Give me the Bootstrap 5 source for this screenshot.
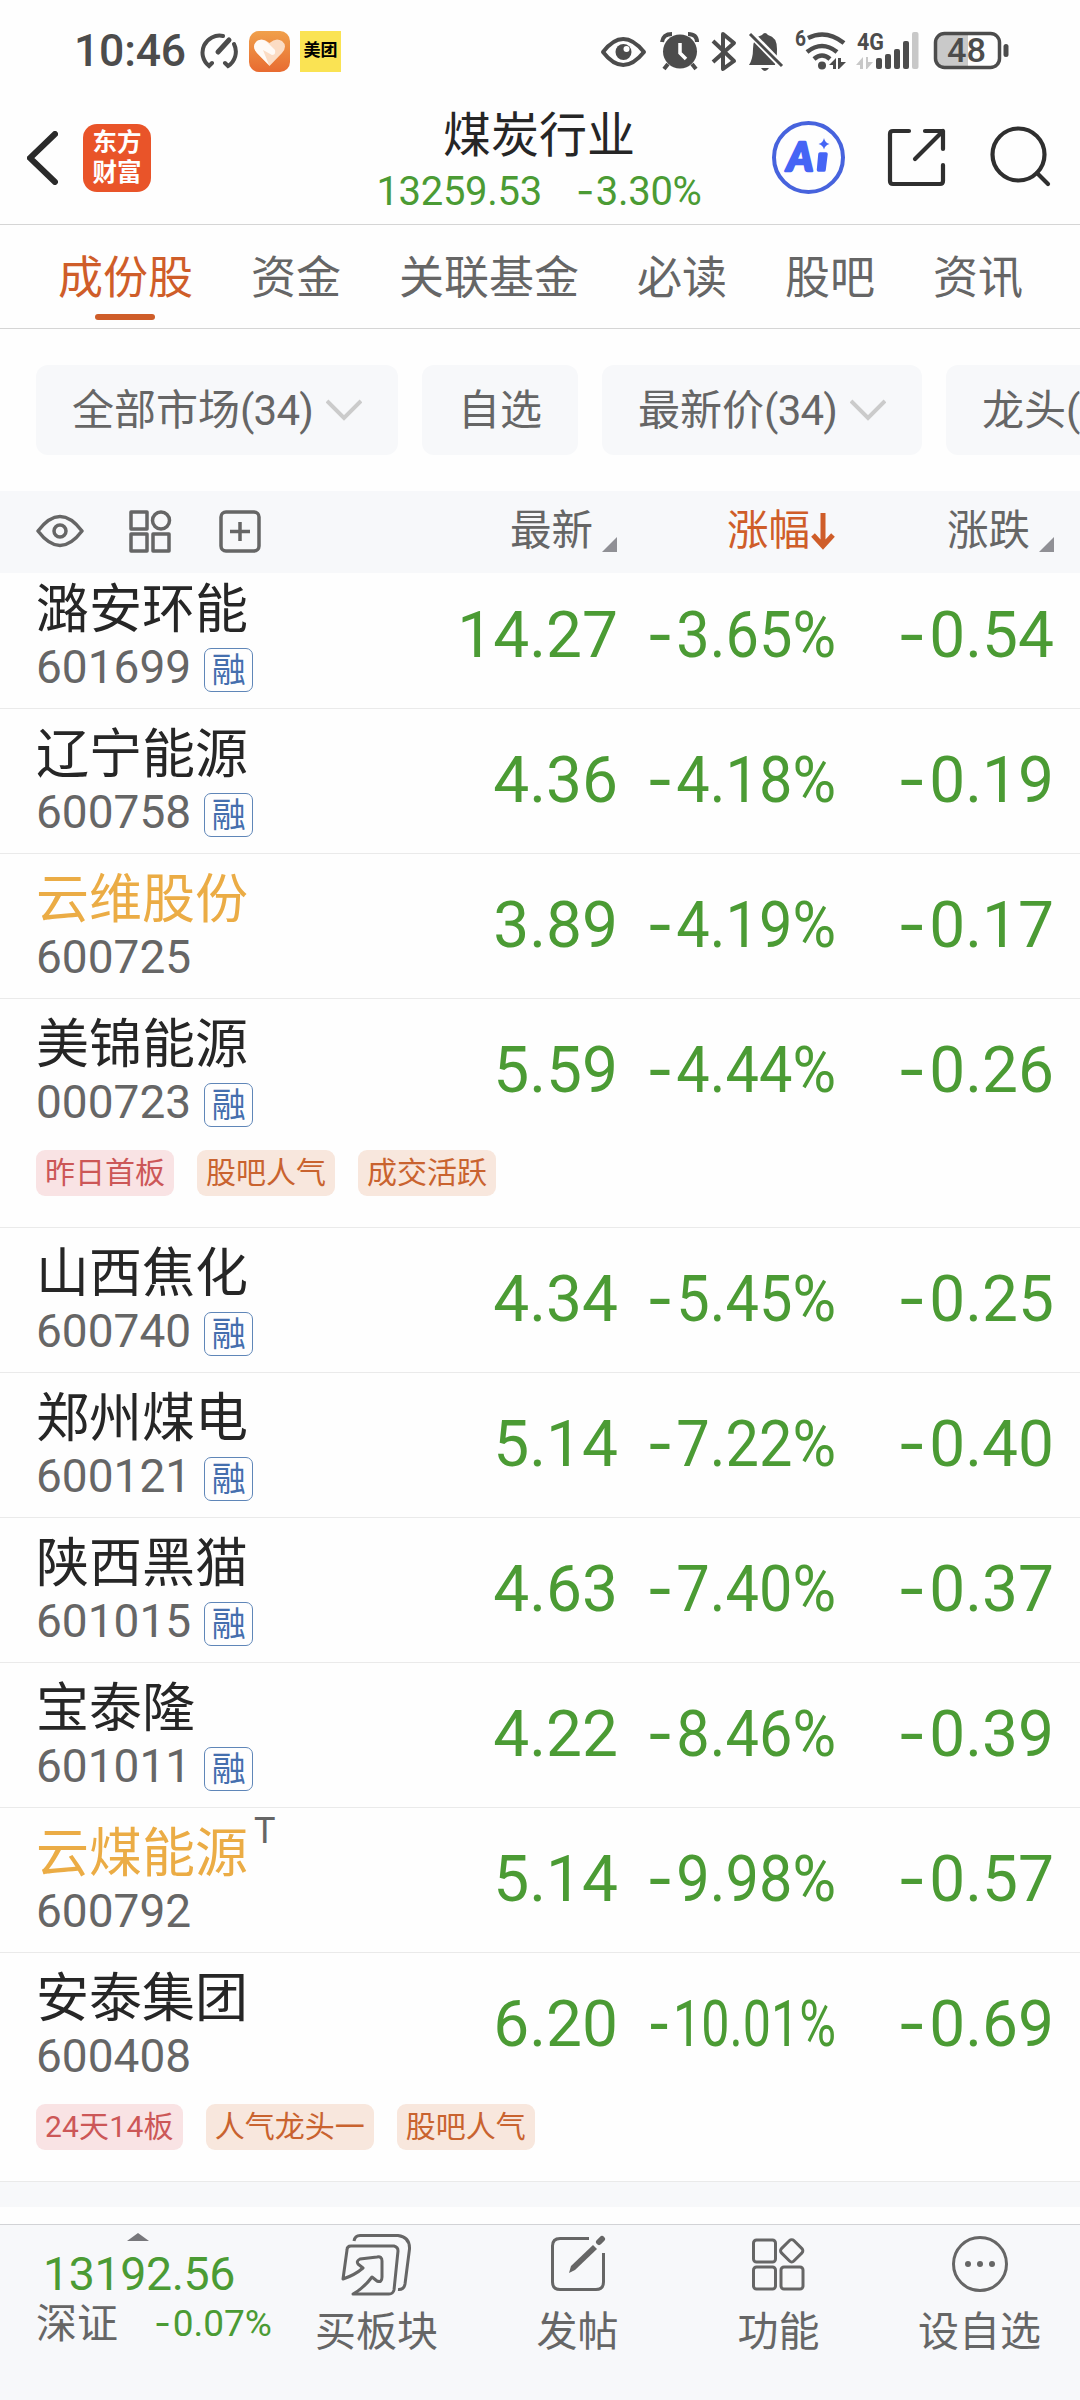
<!DOCTYPE html>
<html lang="zh-CN">
<head>
<meta charset="utf-8">
<meta name="viewport" content="width=device-width, initial-scale=1">
<title>煤炭行业</title>
<link href="https://cdn.jsdelivr.net/npm/bootstrap@5.3.0/dist/css/bootstrap.min.css" rel="stylesheet">
<style>
:root{--up:#4b9b34;--ink:#262626;--soft:#666;--pale:#f7f8fa;--hot:#cf5d29}
body{font-family:Roboto,"Noto Sans CJK SC",sans-serif;color:var(--ink);width:1080px;height:2400px;overflow:hidden;background:#fefefe}
svg{display:block;flex:none}
.green{color:var(--up)}
.neg{font-family:Inter,Roboto,sans-serif;line-height:0;margin-right:.045em}
.statusbar{height:92px;padding:10px 71px 0 74px;color:#4c4c4c}
.clock{font-size:44.5px;font-weight:500;line-height:50px;width:124px;letter-spacing:-.2px}
.heart-app{margin-left:11px}
.meituan{width:41px;height:41px;background:#fae353;color:#000;font-size:17px;font-weight:700;margin-left:10px}
.topbar{height:133px;border-bottom:1px solid #d5d5d5;padding:0 29px 0 27px}
.side{width:260px}
.brand{width:68px;height:68px;border-radius:14px;background:#e95429;color:#fff;font-weight:700;font-size:24.5px;line-height:30px;margin-left:25px}
.page-name{font-size:48px;line-height:54px;margin-top:17px}
.quote{font-size:40px;line-height:48px;margin-top:5px;gap:34px;letter-spacing:-.3px}
.tabs{height:104px;border-bottom:1px solid #d5d5d5;padding-left:58px;gap:58px;font-size:45px;line-height:108px;color:var(--soft)}
.tabs .current{color:var(--hot)}
.tabs .current::after{content:"";position:absolute;left:37px;bottom:8px;width:60px;height:6px;border-radius:3px;background:var(--hot)}
.filters{height:162px;padding:36px 0 36px 36px;gap:24px;overflow:hidden;font-size:42px;color:var(--soft)}
.chip{height:90px;border-radius:12px;background:var(--pale);padding:0 36px 0 36px;flex:none;gap:13px}
.chip .cnt{letter-spacing:-.8px}
.colhead{height:82px;background:var(--pale);font-size:41.5px;line-height:79px;color:var(--soft);padding-left:36px;position:relative;z-index:1}
.tri{width:15px;height:15px;background:#909095;clip-path:polygon(100% 0,100% 100%,0 100%);margin:46px 0 0 9px}
.pct{width:219px}.chg{width:218px;margin-right:26px}
.arrow{margin:21px 1px 0 1px}
.list{margin-top:-9px}
.stock{border-bottom:1px solid #eaeaea;padding-left:36px}
.main-line{height:144px}
.title-cn{font-size:53px;line-height:56px;margin-top:18px}
.gold{color:#ebac45}
.code{font-size:46px;line-height:46px;margin-top:6px;color:var(--soft)}
.rong{width:49px;height:44px;border:1.5px solid #5f86b8;border-radius:7px;color:#456fae;font-size:34px;line-height:42px;margin:4px 0 0 13px}
.sup-t{font-size:36px;line-height:36px;color:var(--soft);margin:5px 0 0 6px}
.num{font-size:64px;line-height:144px;color:var(--up);white-space:nowrap;text-align:right}
.c1{width:220px}.c2{width:218px;display:flex;justify-content:flex-end}.c3{width:218px;margin-right:26px}
.sq{transform:scaleX(.93);transform-origin:100% 50%}
.sq2{transform:scaleX(.785);transform-origin:100% 50%}
.tags{height:84px;padding-top:7px;gap:23px}
.tg{height:46px;border-radius:9px;padding:0 9px;font-size:30px;line-height:45px;background:#f8e7dd;color:#c9632f}
.tg.red{background:#f9e3e4;color:#cc5757}
.tg.run{letter-spacing:.2px}
.band{height:25px;background:var(--pale)}
.dock{height:176px;margin-top:17px;border-top:1px solid #d2d3d6;background:var(--pale);color:var(--soft);font-size:41px}
.dock .idx{width:276px;padding-left:36px}
.dock .big{font-size:46.5px;line-height:48px;margin:9px 0 0 7px;letter-spacing:-.4px}
.dock .peak{width:22px;height:8px;background:#77777b;clip-path:polygon(50% 0,100% 100%,0 100%);margin:8px 0 0 91px}
.dock .second{line-height:52px}
.dock .rate{font-size:37px;margin-left:36px}
.dock .item{width:201px}
.dock .pic{height:80px}
.dock .lbl{line-height:46px;margin-top:4px}
</style>
</head>
<body>
<header class="statusbar d-flex align-items-center">
  <div class="clock">10:46</div>
  <svg width="40" height="38" viewBox="197 33 40 38" fill="none" stroke="#4c4c4c" stroke-width="4" stroke-linecap="round"><path d="M222 37A17 17 0 0 0 208 67L211 64M233 45A17 17 0 0 1 227 67L224 64"/><path d="M217 53L228 41" stroke-width="5"/></svg>
  <svg class="heart-app" width="41" height="41" viewBox="0 0 41 41"><defs><linearGradient id="o" x2="0" y2="1"><stop stop-color="#f0a04b"/><stop offset="1" stop-color="#e86b31"/></linearGradient></defs><rect width="41" height="41" rx="10" fill="url(#o)"/><path d="M20.500 35L8 22Q2 15 8 10Q14 6 20.500 12Q27 6 33 10Q39 15 33 22Z" fill="#fbdcc4"/><path d="M8 22Q2 15 8 10Q13 7 18 11L26 19Q27 24 23 24L14 19L20 34Z" fill="#fff" opacity=".85"/></svg>
  <div class="meituan d-flex align-items-center justify-content-center">美团</div>
  <svg class="ms-auto" width="409" height="64" viewBox="600 19 409 64">
    <g fill="none" stroke="#4c4c4c" stroke-width="4"><path d="M603 52Q623 26 644 52Q623 78 603 52Z" stroke-linejoin="round"/></g>
    <circle cx="623.500" cy="52" r="8" fill="#4c4c4c"/><circle cx="626.500" cy="49" r="3" fill="#fff"/>
    <circle cx="680" cy="51.500" r="17" fill="#4c4c4c"/><path d="M662 42Q663 34 672 34M688 34Q697 34 697 42M668 64L664 69M692 64L696 69" stroke="#4c4c4c" stroke-width="4" fill="none"/><path d="M680 43V53L686 59" stroke="#fff" stroke-width="3.500" fill="none"/>
    <path d="M713 41L734 61L723 69V34L734 43L713 62" fill="none" stroke="#4c4c4c" stroke-width="4" stroke-linejoin="round"/>
    <path d="M749 65Q753 59 753 49Q753 37 762 35Q765 31 768 35Q777 37 777 49Q777 59 775 65ZM761 68H769Q765 74 761 68Z" fill="#4c4c4c"/><path d="M749 32L784 68" stroke="#fff" stroke-width="7"/><path d="M750 34L782 66" stroke="#4c4c4c" stroke-width="3"/>
    <text x="795" y="46" font-size="22" font-weight="700" fill="#4c4c4c" font-family="Roboto" textLength="11" lengthAdjust="spacingAndGlyphs">6</text>
    <g fill="none" stroke="#4c4c4c" stroke-width="4.500"><path d="M808 38Q826 29 844 43M807 52Q822 40 837 52M814 59Q822 52 830 59"/></g><circle cx="822" cy="65.500" r="4" fill="#4c4c4c"/>
    <path d="M829 65L836 58V69H833V65ZM838 58H841V62H846L839 69H838Z" fill="#4c4c4c"/>
    <text x="857" y="50" font-size="24" font-weight="700" fill="#4c4c4c" font-family="Roboto" textLength="27" lengthAdjust="spacingAndGlyphs">4G</text>
    <path d="M856 65L863 57V69H860V65ZM866 57H868V62H873L867 69H866Z" fill="#c8c8c8"/>
    <g fill="#4c4c4c"><rect x="876" y="58" width="6" height="11" rx="2"/><rect x="885" y="54" width="6" height="15" rx="2"/><rect x="894" y="49" width="6" height="20" rx="2"/><rect x="903" y="41" width="6" height="28" rx="2"/></g><rect x="912" y="32" width="6.500" height="37" rx="2" fill="#c8c8c8"/>
    <path d="M968 34H944Q936 34 936 42V60Q936 67 944 67H968Z" fill="#c9c9c9"/><rect x="935.500" y="33.500" width="64" height="34" rx="9" fill="none" stroke="#4c4c4c" stroke-width="3.500"/><rect x="1003.500" y="44" width="5" height="13" rx="2.500" fill="#4c4c4c"/>
    <text x="947" y="62" font-size="33" font-weight="500" fill="#4c4c4c" font-family="Roboto" textLength="39" lengthAdjust="spacingAndGlyphs">48</text>
  </svg>
</header>

<nav class="topbar d-flex justify-content-between">
  <div class="side d-flex align-items-center">
    <svg width="31" height="54" viewBox="0 0 31 54" fill="none" stroke="#2b2b2b" stroke-width="6" stroke-linecap="round"><path d="M28 3L3 27L28 51"/></svg>
    <div class="brand d-flex flex-column align-items-center justify-content-center"><div>东方</div><div>财富</div></div>
  </div>
  <div class="text-center text-nowrap">
    <div class="page-name">煤炭行业</div>
    <div class="quote green d-flex justify-content-center"><span>13259.53</span><span><span class="neg">-</span>3.30%</span></div>
  </div>
  <div class="side d-flex align-items-center justify-content-end">
    <svg width="279" height="76" viewBox="772 120 279 76" fill="none" stroke-linecap="round" stroke-linejoin="round">
      <circle cx="808.500" cy="157.500" r="34.500" stroke="#4763dd" stroke-width="4"/>
      <text x="787" y="171" font-family="Lato,Roboto" font-weight="900" font-style="italic" font-size="40" fill="#4565f5" stroke="#4565f5" stroke-width="2.500">A</text>
      <path d="M820 154H826L824 170H818.500Z" stroke="#4565f5" stroke-width="3.500" fill="#4565f5"/>
      <path d="M824 138Q825 143 829.500 144Q825 145 824 149.500Q823 145 818.500 144Q823 143 824 138Z" fill="#4565f5"/>
      <g stroke="#2f2f2f" stroke-width="4.200"><path d="M909 131H893Q890 131 890 134V181Q890 184 893 184H940Q943 184 943 181V165M925 131H943V149M943 131L915 159"/><circle cx="1018.500" cy="154.500" r="26"/><path d="M1037 173L1048 184"/></g>
    </svg>
  </div>
</nav>

<nav class="tabs d-flex text-nowrap">
  <div class="current position-relative">成份股</div><div>资金</div><div>关联基金</div><div>必读</div><div>股吧</div><div>资讯</div>
</nav>

<section class="filters d-flex text-nowrap">
  <div class="chip d-flex align-items-center"><span>全部市场<span class="cnt">(34)</span></span><svg width="36" height="24" fill="none" stroke="#cbcbcb" stroke-width="4"><path d="M1 3L18 20L35 3"/></svg></div>
  <div class="chip d-flex align-items-center"><span>自选</span></div>
  <div class="chip d-flex align-items-center"><span>最新价<span class="cnt">(34)</span></span><svg width="36" height="24" fill="none" stroke="#cbcbcb" stroke-width="4"><path d="M1 3L18 20L35 3"/></svg></div>
  <div class="chip d-flex align-items-center"><span>龙头<span class="cnt">(</span></span></div>
</section>

<section class="colhead d-flex">
  <svg width="226" height="82" viewBox="36 491 226 82" fill="none" stroke="#666" stroke-width="3.500" stroke-linejoin="round"><path d="M38 531Q60 502 82 531Q60 560 38 531Z"/><circle cx="60" cy="531" r="6"/><rect x="131" y="512" width="16" height="17"/><circle cx="161" cy="520.500" r="8.500"/><rect x="131" y="534" width="16" height="17"/><rect x="153" y="534" width="16" height="17"/><rect x="221" y="512" width="38" height="39" rx="5"/><path d="M230 531.500H250M240 522V541"/></svg>
  <div class="d-flex ms-auto"><span>最新</span><i class="tri"></i></div>
  <div class="pct d-flex justify-content-end"><span style="color:var(--hot)">涨幅</span><svg class="arrow" width="24" height="38" fill="none" stroke="#cf5d29" stroke-width="5"><path d="M12 1V33M2 23L12 34L22 23"/></svg></div>
  <div class="chg d-flex justify-content-end"><span>涨跌</span><i class="tri"></i></div>
</section>

<main class="list">
  <article class="stock"><div class="main-line d-flex"><div class="me-auto"><div class="title-cn">潞安环能</div><div class="d-flex code"><span>601699</span><div class="rong text-center">融</div></div></div><div class="num c1">14.27</div><div class="num c2"><div class="sq"><span class="neg">-</span>3.65%</div></div><div class="num c3"><span class="neg">-</span>0.54</div></div></article>
  <article class="stock"><div class="main-line d-flex"><div class="me-auto"><div class="title-cn">辽宁能源</div><div class="d-flex code"><span>600758</span><div class="rong text-center">融</div></div></div><div class="num c1">4.36</div><div class="num c2"><div class="sq"><span class="neg">-</span>4.18%</div></div><div class="num c3"><span class="neg">-</span>0.19</div></div></article>
  <article class="stock"><div class="main-line d-flex"><div class="me-auto"><div class="title-cn gold">云维股份</div><div class="d-flex code"><span>600725</span></div></div><div class="num c1">3.89</div><div class="num c2"><div class="sq"><span class="neg">-</span>4.19%</div></div><div class="num c3"><span class="neg">-</span>0.17</div></div></article>
  <article class="stock"><div class="main-line d-flex"><div class="me-auto"><div class="title-cn">美锦能源</div><div class="d-flex code"><span>000723</span><div class="rong text-center">融</div></div></div><div class="num c1">5.59</div><div class="num c2"><div class="sq"><span class="neg">-</span>4.44%</div></div><div class="num c3"><span class="neg">-</span>0.26</div></div>
    <div class="tags d-flex"><div class="tg red">昨日首板</div><div class="tg">股吧人气</div><div class="tg">成交活跃</div></div></article>
  <article class="stock"><div class="main-line d-flex"><div class="me-auto"><div class="title-cn">山西焦化</div><div class="d-flex code"><span>600740</span><div class="rong text-center">融</div></div></div><div class="num c1">4.34</div><div class="num c2"><div class="sq"><span class="neg">-</span>5.45%</div></div><div class="num c3"><span class="neg">-</span>0.25</div></div></article>
  <article class="stock"><div class="main-line d-flex"><div class="me-auto"><div class="title-cn">郑州煤电</div><div class="d-flex code"><span>600121</span><div class="rong text-center">融</div></div></div><div class="num c1">5.14</div><div class="num c2"><div class="sq"><span class="neg">-</span>7.22%</div></div><div class="num c3"><span class="neg">-</span>0.40</div></div></article>
  <article class="stock"><div class="main-line d-flex"><div class="me-auto"><div class="title-cn">陕西黑猫</div><div class="d-flex code"><span>601015</span><div class="rong text-center">融</div></div></div><div class="num c1">4.63</div><div class="num c2"><div class="sq"><span class="neg">-</span>7.40%</div></div><div class="num c3"><span class="neg">-</span>0.37</div></div></article>
  <article class="stock"><div class="main-line d-flex"><div class="me-auto"><div class="title-cn">宝泰隆</div><div class="d-flex code"><span>601011</span><div class="rong text-center">融</div></div></div><div class="num c1">4.22</div><div class="num c2"><div class="sq"><span class="neg">-</span>8.46%</div></div><div class="num c3"><span class="neg">-</span>0.39</div></div></article>
  <article class="stock"><div class="main-line d-flex"><div><div class="title-cn gold">云煤能源</div><div class="d-flex code"><span>600792</span></div></div><div class="sup-t me-auto">T</div><div class="num c1">5.14</div><div class="num c2"><div class="sq"><span class="neg">-</span>9.98%</div></div><div class="num c3"><span class="neg">-</span>0.57</div></div></article>
  <article class="stock"><div class="main-line d-flex"><div class="me-auto"><div class="title-cn">安泰集团</div><div class="d-flex code"><span>600408</span></div></div><div class="num c1">6.20</div><div class="num c2"><div class="sq2"><span class="neg">-</span>10.01%</div></div><div class="num c3"><span class="neg">-</span>0.69</div></div>
    <div class="tags d-flex"><div class="tg red run">24天14板</div><div class="tg">人气龙头一</div><div class="tg">股吧人气</div></div></article>
</main>
<div class="band"></div>

<footer class="dock d-flex">
  <div class="idx">
    <div class="peak"></div>
    <div class="big green">13192.56</div>
    <div class="second d-flex align-items-center"><span>深证</span><span class="rate green"><span class="neg">-</span>0.07%</span></div>
  </div>
  <div class="item d-flex flex-column align-items-center"><div class="pic"><svg width="72" height="80" viewBox="340 2225 72 80" fill="none" stroke="#666" stroke-width="3" stroke-linejoin="round"><path d="M353 2241Q354 2235 360 2235.500H397Q409 2237 408.500 2249L404 2284Q403 2290 397 2289.500"/><path d="M342 2279L346 2250Q346 2246 350 2246H393Q397 2247 397 2251L393 2290Q392 2294 388 2294H352Q363 2288 371 2277L376 2281Q381 2283 381 2277V2261Q381 2256 376 2257L359 2259Q355 2261 357 2264L362 2268Q354 2275 342 2279Z"/></svg></div><div class="lbl">买板块</div></div>
  <div class="item d-flex flex-column align-items-center"><div class="pic"><svg width="56" height="80" viewBox="549 2225 56 80" fill="none" stroke="#666" stroke-width="3"><path d="M588 2238.500H559Q551.500 2238.500 551.500 2246V2282Q551.500 2289.500 559 2289.500H595Q602.500 2289.500 602.500 2282V2253"/><path d="M598 2242L601 2239" stroke-width="6" stroke-linecap="round"/><path d="M568 2273L570 2266L592 2245L596 2249L574 2270Z" fill="#666" stroke="none"/></svg></div><div class="lbl">发帖</div></div>
  <div class="item d-flex flex-column align-items-center"><div class="pic"><svg width="54" height="80" viewBox="752 2225 54 80" fill="none" stroke="#666" stroke-width="3"><rect x="753.500" y="2240" width="22" height="22" rx="3"/><rect x="753.500" y="2267" width="22" height="22" rx="3"/><rect x="781" y="2267" width="22" height="22" rx="3"/><rect x="783" y="2242" width="17.500" height="17.500" rx="3" transform="rotate(45 791.700 2250.700)"/></svg></div><div class="lbl">功能</div></div>
  <div class="item d-flex flex-column align-items-center"><div class="pic"><svg width="58" height="80" viewBox="950 2225 58 80"><circle cx="979" cy="2264" r="26.500" fill="none" stroke="#666" stroke-width="3"/><g fill="#666"><circle cx="967" cy="2264" r="3"/><circle cx="979" cy="2264" r="3"/><circle cx="991" cy="2264" r="3"/></g></svg></div><div class="lbl">设自选</div></div>
</footer>
<script src="https://cdn.jsdelivr.net/npm/bootstrap@5.3.0/dist/js/bootstrap.bundle.min.js"></script>
</body>
</html>
